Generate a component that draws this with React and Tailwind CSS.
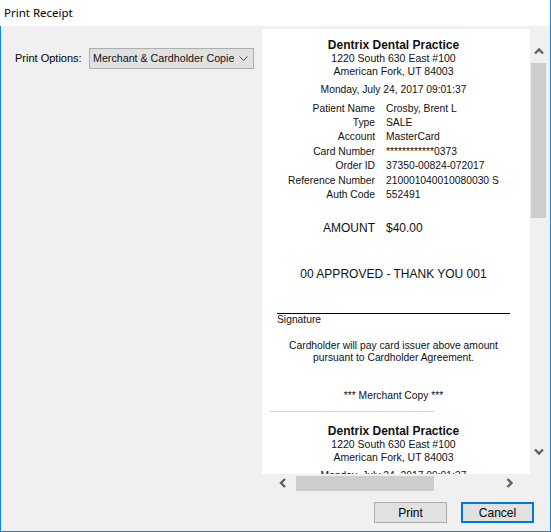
import React from 'react';

const rows = [
  ['Patient Name', 'Crosby, Brent L'],
  ['Type', 'SALE'],
  ['Account', 'MasterCard'],
  ['Card Number', '************0373'],
  ['Order ID', '37350-00824-072017'],
  ['Reference Number', '210001040010080030 S'],
  ['Auth Code', '552491'],
];

function Chevron({ dir }) {
  const pts = {
    up: '1,6.5 5,2.5 9,6.5',
    down: '1,1.5 5,5.5 9,1.5',
    left: '6,1 2,5 6,9',
    right: '1.5,1 5.5,5 1.5,9',
  }[dir];
  const size = dir === 'up' || dir === 'down' ? { w: 10, h: 8 } : { w: 8, h: 10 };
  return (
    <svg width={size.w} height={size.h} viewBox={`0 0 ${size.w} ${size.h}`}>
      <polyline points={pts} fill="none" stroke="#606060" strokeWidth="2.4" />
    </svg>
  );
}

function Header() {
  return (
    <div className="flex flex-col items-center">
      <div className="text-[12px] font-bold leading-[13px]">Dentrix Dental Practice</div>
      <div className="text-[10.5px] leading-[12.5px]">1220 South 630 East #100</div>
      <div className="text-[10.5px] leading-[12.5px]">American Fork, UT 84003</div>
      <div className="mt-[7px] text-[10.3px] leading-[12.5px]">Monday, July 24, 2017 09:01:37</div>
    </div>
  );
}

function Receipt() {
  return (
    <div className="w-[263px] pt-[10px] text-[#111] font-['Liberation_Sans',Arial,sans-serif]">
      <Header />
      <div className="mt-[5px] grid grid-cols-[113px_1fr] gap-x-[11px] text-[10.3px] leading-[14.4px]">
        {rows.map(([k, v]) => (
          <React.Fragment key={k}>
            <div className="text-right whitespace-nowrap">{k}</div>
            <div className="whitespace-nowrap">{v}</div>
          </React.Fragment>
        ))}
      </div>
      <div className="mt-[19px] grid grid-cols-[113px_1fr] gap-x-[11px] text-[12px] leading-[14px]">
        <div className="text-right">AMOUNT</div>
        <div>$40.00</div>
      </div>
      <div className="mt-[32px] text-center text-[12px] leading-[14px]">00 APPROVED - THANK YOU 001</div>
      <div className="mt-[32px] ml-[15px] w-[233px] border-t border-black"></div>
      <div className="ml-[15px] text-[10.3px] leading-[12px]">Signature</div>
      <div className="mt-[14px] text-center text-[10.3px] leading-[12px]">
        <div>Cardholder will pay card issuer above amount</div>
        <div>pursuant to Cardholder Agreement.</div>
      </div>
      <div className="mt-[26px] text-center text-[10.3px] leading-[12px]">*** Merchant Copy ***</div>
      <div className="mt-[9px] ml-[8px] w-[164px] h-px bg-[#d4d4d4]"></div>
      <div className="mt-[13px]">
        <Header />
      </div>
    </div>
  );
}

export default function App() {
  return (
    <div className="w-[551px] h-[532px] flex flex-col border-r border-b border-[#1883d7] font-['Liberation_Sans',Arial,sans-serif] text-black">
      <div className="h-[26px] bg-white flex items-center pl-[4px] text-[11.5px] font-['Noto_Sans',sans-serif]">
        Print Receipt
      </div>
      <div className="flex-1 flex flex-col bg-[#f0f0f0] border-l border-[#1883d7]">
        <div className="flex pt-[3px]">
          <div className="w-[261px] flex items-start pt-[19px] pl-[14px]">
            <div className="h-[21px] flex items-center text-[11px] w-[74px]">Print Options:</div>
            <div className="w-[165px] h-[21px] flex items-center bg-[#e1e1e1] border border-[#adadad]">
              <div className="flex-1 overflow-hidden whitespace-nowrap pl-[3px] text-[10.7px] text-[#111]">
                Merchant &amp; Cardholder Copies
              </div>
              <div className="w-[19px] flex justify-center shrink-0">
                <svg width="9" height="5" viewBox="0 0 9 5">
                  <polyline points="0.5,0.5 4.5,4.5 8.5,0.5" fill="none" stroke="#444" strokeWidth="1" />
                </svg>
              </div>
            </div>
          </div>
          <div className="w-[285px] h-[463px] flex flex-col">
            <div className="flex h-[445px]">
              <div className="w-[268px] bg-white overflow-hidden">
                <Receipt />
              </div>
              <div className="w-[17px] flex flex-col items-center">
                <div className="h-[34px] pt-[18px] flex justify-center">
                  <Chevron dir="up" />
                </div>
                <div className="w-[15px] h-[155px] bg-[#cdcdcd]"></div>
                <div className="flex-1"></div>
                <div className="h-[34px] pt-[8px] flex justify-center">
                  <Chevron dir="down" />
                </div>
              </div>
            </div>
            <div className="flex h-[18px]">
              <div className="w-[268px] flex items-center">
                <div className="w-[34px] pl-[17px] flex items-center">
                  <Chevron dir="left" />
                </div>
                <div className="w-[138px] h-[15px] bg-[#cdcdcd]"></div>
                <div className="flex-1"></div>
                <div className="w-[34px] pl-[10px] flex items-center">
                  <Chevron dir="right" />
                </div>
              </div>
              <div className="w-[17px]"></div>
            </div>
          </div>
        </div>
        <div className="flex justify-end gap-[14px] pt-[10px] pr-[16px]">
          <button className="w-[73px] h-[21px] bg-[#e1e1e1] border border-[#adadad] text-[12px] text-black">
            Print
          </button>
          <button className="w-[73px] h-[21px] bg-[#e1e1e1] border-2 border-[#0078d7] text-[12px] text-black">
            Cancel
          </button>
        </div>
      </div>
    </div>
  );
}
